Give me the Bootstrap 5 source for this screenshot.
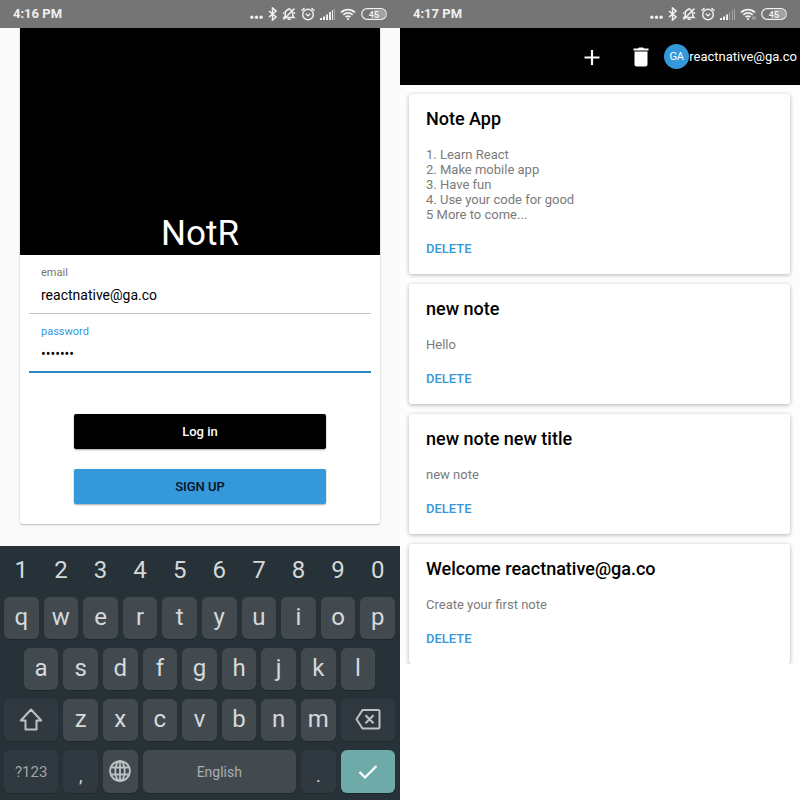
<!DOCTYPE html>
<html lang="en">
<head>
<meta charset="utf-8">
<meta name="viewport" content="width=device-width, initial-scale=1">
<title>NotR</title>
<link href="https://cdn.jsdelivr.net/npm/bootstrap@5.3.0/dist/css/bootstrap.min.css" rel="stylesheet">
<style>
  body { font-family: Roboto, "Liberation Sans", sans-serif; background: #fff; color: #000; }
  .status-bar { height: 28px; background: #757575; color: #f0f0f0; font-size: 13px; font-weight: 700; padding: 0 13px; }
  .status-bar svg { display: block; }
  .status-icons { gap: 5px; }
  .login-screen { background: #fafafa; }
  .login-card { margin: 0 20px 21px; background: #fff; border-radius: 0 0 3px 3px; box-shadow: 0 1px 2px rgba(0,0,0,.25); }
  .hero { height: 227px; background: #000; color: #fff; padding-bottom: 1px; }
  .hero h1 { font-size: 35px; line-height: 40px; font-weight: 400; }
  .field { margin: 0 9px; padding: 10px 12px 4px; border-bottom: 1px solid #c4c4c4; }
  .field label { font-size: 11px; line-height: 16px; color: #757575; }
  .field input { height: 28px; border: 0; padding: 0; outline: 0; background: transparent; font-size: 14px; color: #000; }
  .field.active { padding-bottom: 3px; border-bottom: 2px solid #2e86c1; }
  .field.active label { color: #3498db; }
  .actions { width: 70%; padding: 41px 0 20px; gap: 20px; }
  .action-btn { height: 35px; padding: 0; border: 0; border-radius: 2px; font-size: 13px; font-weight: 500; box-shadow: 0 1px 2px rgba(0,0,0,.35); }
  .action-login, .action-login:hover { background: #000; color: #fff; }
  .action-signup, .action-signup:hover { background: #3498db; color: #06121c; }

  .keyboard { display: grid; grid-template-columns: repeat(20, minmax(0, 1fr)); grid-template-rows: repeat(4, 42px) 43px; gap: 9px 5px; padding: 0 5px 7px 4px; background: #263238; }
  .key { grid-column: span 2; display: flex; align-items: center; justify-content: center; border: 0; padding: 0 0 2px; border-radius: 6px; background: #424a50; color: #d5d9db; font-size: 24px; line-height: 28px; box-shadow: 0 1px 0 rgba(0,0,0,.2); }
  .key-num { background: none; box-shadow: none; padding: 6px 0 0; }
  .key-indent { grid-column: 2 / span 2; }
  .key-newrow { grid-column: 1 / span 3; }
  .key-wide { grid-column: span 3; }
  .key-space { grid-column: span 8; font-size: 14px; color: #a9aeb2; padding: 0; }
  .key-dark { background: #30393f; }
  .key-mode { font-size: 15px; color: #a0a6aa; padding: 0; }
  .key-dot { font-size: 18px; padding: 8px 0 0; }
  .key-ok { background: #6eaba8; padding: 0; }

  .app-bar { height: 57px; background: #000; color: #fff; padding-right: 3px; }
  .icon-btn { background: none; border: 0; padding: 0; color: #fff; display: flex; }
  .app-tools { gap: 29px; margin-right: 13px; }
  .avatar { width: 25px; height: 25px; border-radius: 50%; background: #3498db; font-size: 11px; line-height: 12px; padding-top: 1px; }
  .account { font-size: 13px; }
  .notes { padding: 9px 10px 0 9px; gap: 10px; background: #fdfdfd; overflow: hidden; }
  .note { padding: 13px 17px; background: #fff; border-radius: 3px; box-shadow: 0 1px 4px rgba(0,0,0,.3); }
  .note h2 { font-size: 18px; line-height: 24px; font-weight: 500; margin: 0 0 16px; }
  .note p { font-size: 13px; line-height: 15px; color: #7b7b7b; margin: 0 0 15px; }
  .note-delete { background: none; border: 0; padding: 0; display: block; font-size: 13px; line-height: 24px; font-weight: 500; color: #3498db; }
</style>
</head>
<body>
<svg width="0" height="0" class="position-absolute" aria-hidden="true">
  <symbol id="i-dots" viewBox="0 0 14 14"><g fill="currentColor"><circle cx="2" cy="10.500" r="1.800"/><circle cx="7" cy="10.500" r="1.800"/><circle cx="12" cy="10.500" r="1.800"/></g></symbol>
  <symbol id="i-bt" viewBox="0 0 9 14"><path d="M1 4l7 6-3.500 3V1L8 4l-7 6" fill="none" stroke="currentColor" stroke-width="1.500"/></symbol>
  <symbol id="i-bell" viewBox="0 0 14 14"><path d="M2 10.500h10L10.800 9V6.500a3.800 3.800 0 0 0-2.600-3.700C8 1.500 6 1.500 5.800 2.800A3.800 3.800 0 0 0 3.200 6.500V9zM5.500 12.200h3M1.500 12.500L12.500 1.500" fill="none" stroke="currentColor" stroke-width="1.500"/><path d="M1 7l1-2M13 7l-.8-2" stroke="currentColor"/></symbol>
  <symbol id="i-alarm" viewBox="0 0 14 14"><g fill="none" stroke="currentColor" stroke-width="1.400"><circle cx="7" cy="7.500" r="5.300"/><path d="M.6 3.800L3.500 1M13.400 3.800L10.500 1M4.800 6.800L7 8.800 9.300 6.800"/></g></symbol>
  <symbol id="i-wifi" viewBox="0 0 16 12"><g fill="none" stroke="currentColor" stroke-width="1.800"><path d="M1 4.500a10 10 0 0 1 14 0M3.300 6.900a6.700 6.700 0 0 1 9.400 0M5.600 9.200a3.400 3.400 0 0 1 4.800 0"/></g><circle cx="8" cy="11" r="1.100" fill="currentColor"/></symbol>
</svg>

<main class="container-fluid p-0">
  <div class="row g-0 min-vh-100">

    <section class="col-6 login-screen d-flex flex-column">
      <div class="status-bar d-flex align-items-center justify-content-between">
        <span>4:16 PM</span>
        <div class="status-icons d-flex align-items-center">
          <svg width="13" height="14"><use href="#i-dots"/></svg>
          <svg width="9" height="14"><use href="#i-bt"/></svg>
          <svg width="14" height="14"><use href="#i-bell"/></svg>
          <svg width="14" height="14"><use href="#i-alarm"/></svg>
          <svg width="15" height="14" viewBox="0 0 15 14" fill="currentColor"><path d="M0 11h2v2H0zM3 9.500h2V13H3zM6 7.500h2V13H6zM9 5h2v8H9z"/><path d="M12 3h1v10h-1z"/><path d="M14 2h1v11h-1z" opacity=".4"/></svg>
          <svg width="16" height="12"><use href="#i-wifi"/></svg>
          <svg width="26" height="12" viewBox="0 0 26 12"><rect x=".7" y=".7" width="24.600" height="10.600" rx="5.300" fill="none" stroke="currentColor" stroke-width="1.200"/><path d="M13 2h7.500a4 4 0 0 1 0 8H13z" fill="#a2a2a2"/><text x="13" y="9.500" text-anchor="middle" font-size="9" font-weight="700" fill="currentColor">45</text></svg>
        </div>
      </div>

      <div class="flex-grow-1">
        <div class="login-card">
          <div class="hero d-flex align-items-end justify-content-center"><h1 class="m-0">NotR</h1></div>
          <form>
            <div class="field">
              <label for="email" class="d-block">email</label>
              <input id="email" type="text" class="d-block w-100" value="reactnative@ga.co">
            </div>
            <div class="field active">
              <label for="password" class="d-block">password</label>
              <input id="password" type="password" class="d-block w-100" value="notesap">
            </div>
            <div class="actions d-flex flex-column mx-auto">
              <button type="button" class="btn action-btn action-login">Log in</button>
              <button type="button" class="btn action-btn action-signup">SIGN UP</button>
            </div>
          </form>
        </div>
      </div>

      <div class="keyboard">
        <button class="key key-num">1</button><button class="key key-num">2</button><button class="key key-num">3</button><button class="key key-num">4</button><button class="key key-num">5</button><button class="key key-num">6</button><button class="key key-num">7</button><button class="key key-num">8</button><button class="key key-num">9</button><button class="key key-num">0</button>
        <button class="key">q</button><button class="key">w</button><button class="key">e</button><button class="key">r</button><button class="key">t</button><button class="key">y</button><button class="key">u</button><button class="key">i</button><button class="key">o</button><button class="key">p</button>
        <button class="key key-indent">a</button><button class="key">s</button><button class="key">d</button><button class="key">f</button><button class="key">g</button><button class="key">h</button><button class="key">j</button><button class="key">k</button><button class="key">l</button>
        <button class="key key-dark key-newrow" aria-label="Shift"><svg width="24" height="24" viewBox="0 0 24 24" fill="none" stroke="#bdc2c5" stroke-width="2" stroke-linejoin="round"><path d="M12 2.500L1.800 13.500H6.500V22.500H17.500V13.500H22.200z"/></svg></button>
        <button class="key">z</button><button class="key">x</button><button class="key">c</button><button class="key">v</button><button class="key">b</button><button class="key">n</button><button class="key">m</button>
        <button class="key key-dark key-wide" aria-label="Backspace"><svg width="26" height="22" viewBox="0 0 26 22" fill="none" stroke="#bdc2c5" stroke-width="2" stroke-linejoin="round"><path d="M7.500 2H23a1.500 1.500 0 0 1 1.500 1.500V19A1.500 1.500 0 0 1 23 20.500H7.500L1.500 11.200zM10.500 7.200l8 8M18.500 7.200l-8 8"/></svg></button>
        <button class="key key-dark key-newrow key-mode">?123</button>
        <button class="key key-dark key-dot">,</button>
        <button class="key" aria-label="Language"><svg width="22" height="22" viewBox="0 0 22 22" fill="none" stroke="#bdc2c5" stroke-width="1.800"><circle cx="11" cy="11" r="9.900"/><ellipse cx="11" cy="11" rx="4.700" ry="9.900"/><path d="M11 1v20M2 7.500h18M2 14.500h18"/></svg></button>
        <button class="key key-space">English</button>
        <button class="key key-dark key-dot">.</button>
        <button class="key key-wide key-ok" aria-label="Done"><svg width="20" height="16" viewBox="0 0 20 16" fill="none" stroke="#fff" stroke-width="2.200"><path d="M1.500 8l5.500 5.500L18.500 2"/></svg></button>
      </div>
    </section>

    <section class="col-6 d-flex flex-column">
      <div class="status-bar d-flex align-items-center justify-content-between">
        <span>4:17 PM</span>
        <div class="status-icons d-flex align-items-center">
          <svg width="13" height="14"><use href="#i-dots"/></svg>
          <svg width="9" height="14"><use href="#i-bt"/></svg>
          <svg width="14" height="14"><use href="#i-bell"/></svg>
          <svg width="14" height="14"><use href="#i-alarm"/></svg>
          <svg width="15" height="14" viewBox="0 0 15 14" fill="currentColor"><path d="M0 11h2v2H0zM3 9.500h2V13H3zM6 7.500h2V13H6z"/><path d="M9 5h1v8H9zM12 3h1v10h-1zM14 2h1v11h-1z" opacity=".4"/></svg>
          <svg width="16" height="12" viewBox="0 0 16 12"><use href="#i-wifi" width="16" height="12"/><rect x="11" y="8" width="5" height="4" fill="#757575"/><path d="M13 8.500v3M15 8.500v3" stroke="currentColor" opacity=".7"/></svg>
          <svg width="26" height="12" viewBox="0 0 26 12"><rect x=".7" y=".7" width="24.600" height="10.600" rx="5.300" fill="none" stroke="currentColor" stroke-width="1.200"/><path d="M13 2h7.500a4 4 0 0 1 0 8H13z" fill="#a2a2a2"/><text x="13" y="9.500" text-anchor="middle" font-size="9" font-weight="700" fill="currentColor">45</text></svg>
        </div>
      </div>

      <header class="app-bar d-flex align-items-center justify-content-end">
        <div class="app-tools d-flex align-items-center">
          <button class="icon-btn" aria-label="Add note"><svg width="20" height="20" viewBox="0 0 20 20"><path d="M10 3v15M2.500 10.500h15" stroke="currentColor" stroke-width="2.200"/></svg></button>
          <button class="icon-btn" aria-label="Delete notes"><svg width="20" height="20" viewBox="0 0 20 20" fill="currentColor"><path d="M2.500 1.600H7L8 .6h4l1 1h4.500v2h-15zM3.500 4.600h13V17.600a2 2 0 0 1-2 2h-9a2 2 0 0 1-2-2z"/></svg></button>
        </div>
        <span class="avatar d-flex align-items-center justify-content-center">GA</span>
        <span class="account">reactnative@ga.co</span>
      </header>

      <div class="notes d-flex flex-column">
        <article class="note">
          <h2>Note App</h2>
          <p>1. Learn React<br>2. Make mobile app<br>3. Have fun<br>4. Use your code for good<br>5 More to come...</p>
          <button class="note-delete">DELETE</button>
        </article>
        <article class="note">
          <h2>new note</h2>
          <p>Hello</p>
          <button class="note-delete">DELETE</button>
        </article>
        <article class="note">
          <h2>new note new title</h2>
          <p>new note</p>
          <button class="note-delete">DELETE</button>
        </article>
        <article class="note">
          <h2>Welcome reactnative@ga.co</h2>
          <p>Create your first note</p>
          <button class="note-delete">DELETE</button>
        </article>
      </div>
    </section>

  </div>
</main>
<script src="https://cdn.jsdelivr.net/npm/bootstrap@5.3.0/dist/js/bootstrap.bundle.min.js"></script>
</body>
</html>
